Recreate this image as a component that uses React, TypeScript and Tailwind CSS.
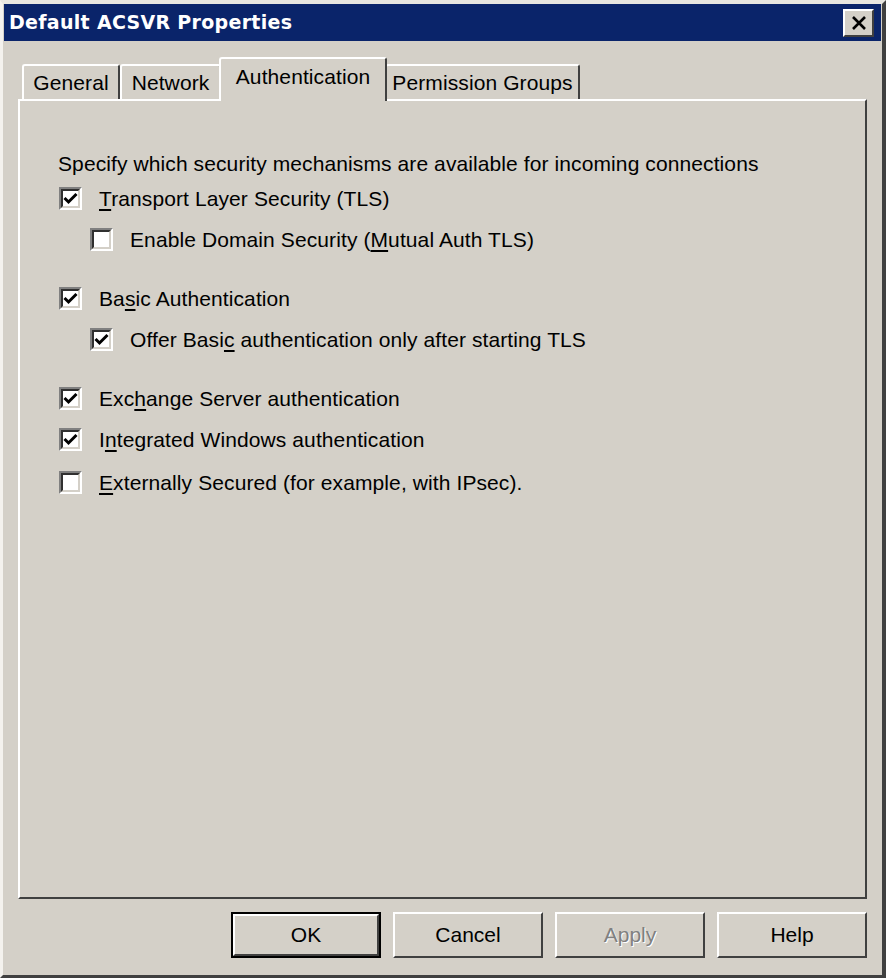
import React from "react";

const font = { fontFamily: '"Liberation Sans", Arial, sans-serif' };

function U({ children }: { children: React.ReactNode }) {
  return <span className="underline underline-offset-[3px] decoration-[1.5px]">{children}</span>;
}

function CheckBox({ checked }: { checked: boolean }) {
  return (
    <div className="w-[23px] h-[23px] shrink-0 border-t-2 border-l-2 border-t-[#808080] border-l-[#808080] border-b-2 border-r-2 border-b-white border-r-white">
      <div className="w-full h-full border-t-2 border-l-2 border-t-[#303030] border-l-[#303030] border-b-2 border-r-2 border-b-[#d4d0c8] border-r-[#d4d0c8] bg-white flex items-center justify-center">
        {checked && (
          <svg width="15" height="13" viewBox="0 0 15 13">
            <path d="M1.5 6 L5.5 10 L13.5 2" fill="none" stroke="#000" strokeWidth="3" />
          </svg>
        )}
      </div>
    </div>
  );
}

function Option({ checked, indent, children }: { checked: boolean; indent?: boolean; children: React.ReactNode }) {
  return (
    <div className={`flex items-center gap-[17px] h-[41px] ${indent ? "pl-[32px]" : "pl-[1px]"}`}>
      <CheckBox checked={checked} />
      <span className="text-[21px] tracking-[0.1px] text-black">{children}</span>
    </div>
  );
}

function Tab({ label, width, active }: { label: string; width: string; active?: boolean }) {
  if (active) {
    return (
      <div className={`relative z-10 -mx-[2px] mb-[-2px] h-[44px] ${width} flex items-center justify-center bg-[#d4d0c8] border-t-2 border-l-2 border-t-white border-l-white border-r-2 border-r-[#404040] rounded-t-[3px]`}>
        <span className="text-[21px] tracking-[0.1px] -mt-[6px]">{label}</span>
      </div>
    );
  }
  return (
    <div className={`h-[35px] ${width} flex items-center justify-center bg-[#d4d0c8] border-t-2 border-l-2 border-t-white border-l-white border-r-2 border-r-[#404040] rounded-t-[3px]`}>
      <span className="text-[21px] tracking-[0.1px]">{label}</span>
    </div>
  );
}

function Button({ label, def, disabled }: { label: string; def?: boolean; disabled?: boolean }) {
  return (
    <div className={`w-[150px] h-[46px] ${def ? "border-2 border-black" : ""}`}>
      <div className="w-full h-full border-t-2 border-l-2 border-t-white border-l-white border-b-2 border-r-2 border-b-[#404040] border-r-[#404040] flex items-center justify-center">
        {disabled ? (
          <span className="text-[21px] text-[#808080] [text-shadow:1px_1px_0_#ffffff]">{label}</span>
        ) : (
          <span className="text-[21px] text-black">{label}</span>
        )}
      </div>
    </div>
  );
}

export default function App() {
  return (
    <div style={font} className="w-[886px] h-[978px] bg-[#d4d0c8] overflow-hidden">
      <div className="w-full h-full flex flex-col border-l-[3px] border-l-[#f4f2ee] border-t-[4px] border-t-[#e8e6e0] border-r-[4px] border-r-[#404040] border-b-[3px] border-b-[#404040]">
        {/* Title bar */}
        <div className="h-[37px] mx-[1px] bg-[#0a246a] flex items-center justify-between pl-[5px] pr-[7px]">
          <span className="text-white font-bold tracking-[0.3px]" style={{ fontFamily: '"DejaVu Sans", Tahoma, sans-serif', fontSize: 19 }}>
            Default ACSVR Properties
          </span>
          <div className="w-[31px] h-[28px] bg-[#d4d0c8] border-t-2 border-l-2 border-t-white border-l-white border-b-2 border-r-2 border-b-[#404040] border-r-[#404040] flex items-center justify-center">
            <svg width="16" height="14" viewBox="0 0 16 14">
              <path d="M2 1 L14 13 M14 1 L2 13" stroke="#000" strokeWidth="2.6" />
            </svg>
          </div>
        </div>

        <div className="flex-1 flex flex-col px-[15px] pt-[14px] pb-[14px]">
          {/* Tabs */}
          <div className="flex items-end pl-[4px] h-[44px]">
            <Tab label="General" width="w-[98px]" />
            <Tab label="Network" width="w-[101px]" />
            <Tab label="Authentication" width="w-[168px]" active />
            <Tab label="Permission Groups" width="w-[195px]" />
          </div>

          {/* Panel */}
          <div className="h-[800px] border-t-2 border-l-2 border-t-white border-l-white border-b-2 border-r-2 border-b-[#404040] border-r-[#404040] pl-[38px] pt-[51px]">
            <div className="text-[21px] tracking-[0.1px] text-black h-[24px] leading-[24px] mb-[2px]">
              Specify which security mechanisms are available for incoming connections
            </div>
            <Option checked>
              <U>T</U>ransport Layer Security (TLS)
            </Option>
            <Option checked={false} indent>
              Enable Domain Security (<U>M</U>utual Auth TLS)
            </Option>
            <div className="h-[18px]" />
            <Option checked>
              Ba<U>s</U>ic Authentication
            </Option>
            <Option checked indent>
              Offer Basi<U>c</U> authentication only after starting TLS
            </Option>
            <div className="h-[18px]" />
            <Option checked>
              Exc<U>h</U>ange Server authentication
            </Option>
            <Option checked>
              I<U>n</U>tegrated Windows authentication
            </Option>
            <div className="h-[2px]" />
            <Option checked={false}>
              <U>E</U>xternally Secured (for example, with IPsec).
            </Option>
          </div>

          {/* Buttons */}
          <div className="flex justify-end gap-[12px] mt-[13px]">
            <Button label="OK" def />
            <Button label="Cancel" />
            <Button label="Apply" disabled />
            <Button label="Help" />
          </div>
        </div>
      </div>
    </div>
  );
}
